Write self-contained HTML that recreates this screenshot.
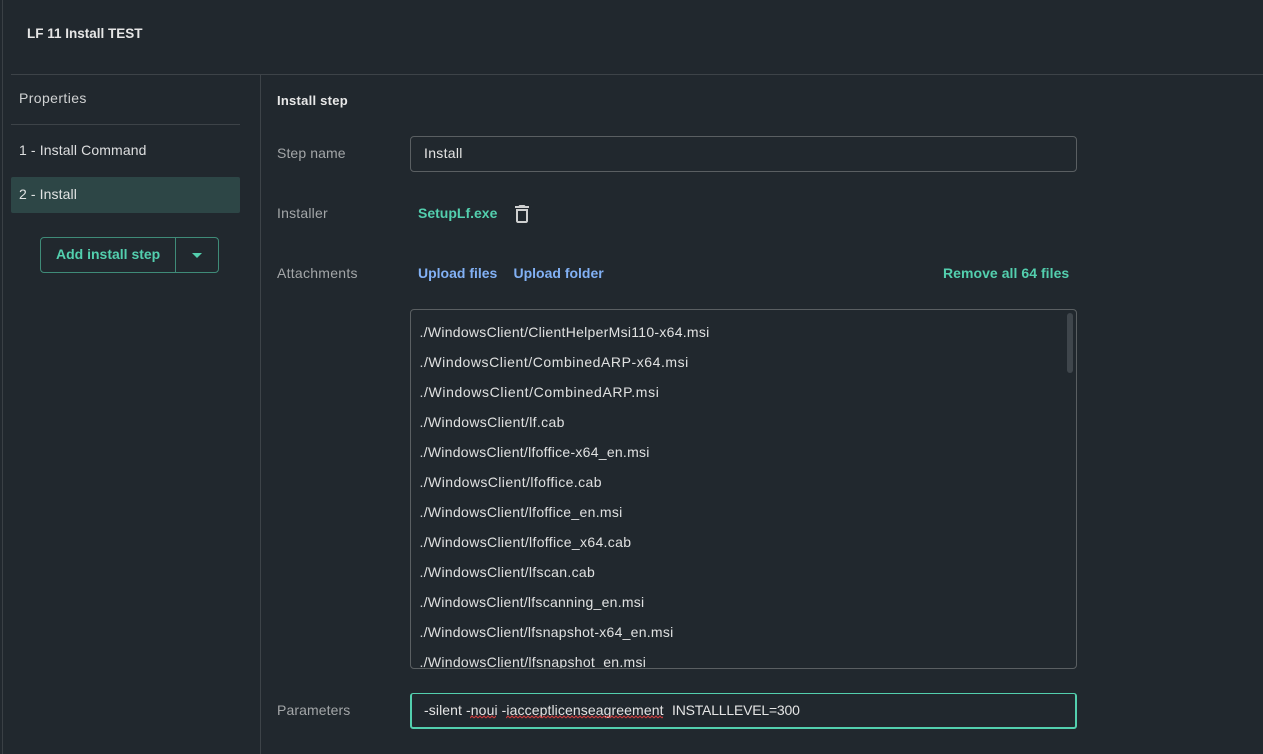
<!DOCTYPE html>
<html>
<head>
<meta charset="utf-8">
<style>
html,body{margin:0;padding:0;width:1263px;height:754px;overflow:hidden;background:#21282e;}
body{position:relative;font-family:"Liberation Sans",sans-serif;font-size:14px;color:#e0e0e0;}
.t{position:absolute;white-space:pre;line-height:20px;height:20px;}
.b{position:absolute;}
.g{color:#53cfae;font-weight:bold;}
.bl{color:#82b1f5;font-weight:bold;}
.l{color:#a3a6a8;}
.f{left:419.500px;color:#e0e1e1;}
</style>
</head>
<body>
<div class="b" style="left:2px;top:0;width:1px;height:754px;background:#3a4045"></div>
<div class="b" style="left:11px;top:74px;width:1252px;height:1px;background:#3d4348"></div>
<div class="b" style="left:260px;top:74px;width:1px;height:680px;background:#3d4348"></div>

<div class="t" style="left:27px;top:24px;font-weight:bold;color:#e6e6e6;font-size:13.500px">LF 11 Install TEST</div>

<div class="t" style="left:19px;top:88px;color:#d0d2d3;letter-spacing:.4px">Properties</div>
<div class="b" style="left:11px;top:124px;width:229px;height:1px;background:#3d4348"></div>
<div class="t" style="left:19px;top:140px;color:#dedfe0;letter-spacing:.12px">1 - Install Command</div>
<div class="b" style="left:11px;top:177px;width:229px;height:36px;background:#2d4646;border-radius:2px"></div>
<div class="t" style="left:19px;top:184px;color:#e2e4e4;letter-spacing:.1px">2 - Install</div>

<div class="b" style="left:40px;top:237px;width:177px;height:34px;border:1px solid #3f8b78;border-radius:4px"></div>
<div class="b" style="left:175px;top:238px;width:1px;height:34px;background:#3f8b78"></div>
<div class="t g" style="left:56px;top:244px">Add install step</div>
<div class="b" style="left:192px;top:253px;width:0;height:0;border-left:5px solid transparent;border-right:5px solid transparent;border-top:5px solid #53cfae"></div>

<div class="t" style="left:277px;top:91px;font-weight:bold;color:#e8e8e8;font-size:13px;letter-spacing:.25px">Install step</div>

<div class="t l" style="left:277px;top:143px;letter-spacing:.1px">Step name</div>
<div class="b" style="left:410px;top:136px;width:665px;height:34px;border:1px solid #5a5f62;border-radius:4px"></div>
<div class="t" style="left:424px;top:143px;color:#e4e4e4;letter-spacing:.3px">Install</div>

<div class="t l" style="left:277px;top:203px;letter-spacing:.2px">Installer</div>
<div class="t g" style="left:418px;top:203px">SetupLf.exe</div>
<svg class="b" style="left:510px;top:202px" width="24" height="24" viewBox="0 0 24 24"><path fill="#cfd0d0" d="M15.500 4l-1-1h-5l-1 1H5v2h14V4h-3.500zM6 7v12c0 1.100.9 2 2 2h8c1.100 0 2-.9 2-2V7H6zm2 2h8v10H8V9z"/></svg>

<div class="t l" style="left:277px;top:263px;letter-spacing:.27px">Attachments</div>
<div class="t bl" style="left:418px;top:263px">Upload files</div>
<div class="t bl" style="left:513.500px;top:263px">Upload folder</div>
<div class="t g" style="left:943px;top:263px;letter-spacing:.05px">Remove all 64 files</div>

<div class="b" style="left:410px;top:309px;width:665px;height:358px;border:1px solid #5a5f62;border-radius:4px"></div>
<div class="b" style="left:411px;top:310px;width:665px;height:358px;overflow:hidden;border-radius:3px">
  <div style="position:relative;left:-411px;top:-310px;height:668px">
    <div class="t f" style="top:322px;letter-spacing:.28px">./WindowsClient/ClientHelperMsi110-x64.msi</div>
    <div class="t f" style="top:352px;letter-spacing:.56px">./WindowsClient/CombinedARP-x64.msi</div>
    <div class="t f" style="top:382px;letter-spacing:.62px">./WindowsClient/CombinedARP.msi</div>
    <div class="t f" style="top:412px;letter-spacing:.34px">./WindowsClient/lf.cab</div>
    <div class="t f" style="top:442px;letter-spacing:.27px">./WindowsClient/lfoffice-x64_en.msi</div>
    <div class="t f" style="top:472px;letter-spacing:.41px">./WindowsClient/lfoffice.cab</div>
    <div class="t f" style="top:502px;letter-spacing:.31px">./WindowsClient/lfoffice_en.msi</div>
    <div class="t f" style="top:532px;letter-spacing:.33px">./WindowsClient/lfoffice_x64.cab</div>
    <div class="t f" style="top:562px;letter-spacing:.32px">./WindowsClient/lfscan.cab</div>
    <div class="t f" style="top:592px;letter-spacing:.26px">./WindowsClient/lfscanning_en.msi</div>
    <div class="t f" style="top:622px;letter-spacing:.26px">./WindowsClient/lfsnapshot-x64_en.msi</div>
    <div class="t f" style="top:652px;letter-spacing:.29px">./WindowsClient/lfsnapshot_en.msi</div>
  </div>
</div>
<div class="b" style="left:1067px;top:313px;width:6px;height:60px;background:#3f464c;border-radius:3px"></div>

<div class="t l" style="left:277px;top:700px;letter-spacing:.1px">Parameters</div>
<div class="b" style="left:410px;top:693px;width:663px;height:33px;border:1px solid #53cfae;border-left-width:2px;border-right-width:2px;border-bottom-width:2px;border-radius:3px"></div>
<div class="t" style="left:424px;top:700px;color:#e4e4e4;letter-spacing:.1px">-silent -noui -iacceptlicenseagreement</div>
<div class="t" style="left:672px;top:700px;color:#e4e4e4;letter-spacing:-.2px">INSTALLLEVEL=300</div>
<svg class="b" style="left:470px;top:715px" width="194" height="4" viewBox="0 0 194 4">
<defs><pattern id="w" width="4" height="4" patternUnits="userSpaceOnUse"><path fill="none" stroke="#d23c3c" stroke-width="1" d="M0 3l2-2 2 2"/></pattern></defs>
<rect x="0" y="0" width="26" height="4" fill="url(#w)"/>
<rect x="36" y="0" width="157" height="4" fill="url(#w)"/>
</svg>
</body>
</html>
